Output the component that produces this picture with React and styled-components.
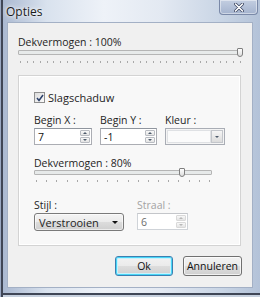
import React from "react";
import styled, { createGlobalStyle } from "styled-components";

const GlobalStyle = createGlobalStyle`
  html, body {
    margin: 0;
    padding: 0;
  }
  body {
    width: 260px;
    height: 297px;
    overflow: hidden;
    font-family: "Open Sans", "Noto Sans", sans-serif;
    font-size: 10.5px;
    color: #1e1e1e;
  }
`;

const Window = styled.div`
  width: 260px;
  height: 297px;
  box-sizing: border-box;
  display: flex;
  flex-direction: column;
  background: linear-gradient(
    90deg,
    #a7b6cf 0%,
    #d9e2ee 18%,
    #eef2f8 40%,
    #e3e9f2 62%,
    #c9d5e5 85%,
    #b3c2d8 100%
  );
  box-shadow: inset 1px 0 0 #9aa8c2, inset 3px 0 0 #3f4656,
    inset 0 -2px 0 #c6d0de, inset 0 -4px 0 #3f4656;
`;

const TitleBar = styled.div`
  height: 22px;
  display: flex;
  align-items: flex-start;
  padding-left: 6px;
  padding-right: 2px;
`;

const Title = styled.span`
  margin-top: 4px;
  font-size: 12px;
  line-height: 15px;
  color: #1b1b1b;
  text-shadow: 0 0 6px #ffffff, 0 0 3px #ffffff;
`;

const CloseButton = styled.div`
  margin-left: auto;
  width: 39px;
  height: 15px;
  box-sizing: border-box;
  border: 1px solid #7a89a8;
  border-top: none;
  border-radius: 0 0 4px 4px;
  background: linear-gradient(#c3cee1, #a4b3ce);
  box-shadow: inset 0 0 0 1px rgba(255, 255, 255, 0.45);
  display: flex;
  align-items: center;
  justify-content: center;
`;

const Body = styled.div`
  flex: 1;
  display: flex;
  padding: 0 7px 9px 7px;
`;

const Client = styled.div`
  flex: 1;
  box-sizing: border-box;
  background: #f0f0f0;
  border: 1px solid #a3b0c5;
  padding: 12px 9px 0 10px;
  display: flex;
  flex-direction: column;
`;

const Label = styled.div`
  line-height: ${(p) => p.lh || 14}px;
  color: ${(p) => (p.disabled ? "#a3a3a3" : "#1e1e1e")};
  white-space: nowrap;
`;

const SliderWrap = styled.div`
  position: relative;
  margin-right: ${(p) => p.mr || 0}px;
`;

const Track = styled.div`
  height: 5px;
  box-sizing: border-box;
  border: 1px solid #b5b5b5;
  border-radius: 1px;
  background: #e7eaea;
`;

const Thumb = styled.div`
  position: absolute;
  top: -2px;
  width: 6px;
  height: 9px;
  box-sizing: border-box;
  border: 1px solid #7f7f7f;
  border-radius: 1px 1px 3px 3px;
  background: linear-gradient(#fdfdfd, #dedede);
`;

const Ticks = styled.div`
  display: flex;
  justify-content: space-between;
  margin-top: ${(p) => p.gap || 6}px;
  padding: 0 2px;
`;

const Tick = styled.span`
  width: 1px;
  height: 2px;
  background: #a8a8a8;
`;

const Panel = styled.div`
  margin: 12px 2px 0 0;
  height: 171px;
  box-sizing: border-box;
  border: 1px solid #d3d3d3;
  box-shadow: inset 0 0 0 1px #ffffff;
  background: #f8f8f8;
  padding: 14px 14px 0 15px;
  display: flex;
  flex-direction: column;
`;

const CheckRow = styled.label`
  display: flex;
  align-items: center;
  gap: 3px;
  line-height: 15px;
  font-size: 11px;
`;

const Box = styled.span`
  width: 11px;
  height: 11px;
  box-sizing: border-box;
  border: 1px solid #8f8f8f;
  background: linear-gradient(135deg, #dcdcdc, #fbfbfb);
  display: flex;
  align-items: center;
  justify-content: center;
`;

const FieldRow = styled.div`
  display: flex;
  gap: ${(p) => p.gap || 8}px;
  margin-top: ${(p) => p.mt || 0}px;
`;

const Field = styled.div`
  display: flex;
  flex-direction: column;
  width: ${(p) => p.w}px;
`;

const SpinBox = styled.div`
  margin-top: 1px;
  height: ${(p) => p.h || 17}px;
  box-sizing: border-box;
  border: 1px solid ${(p) => (p.disabled ? "#cfd3d8" : "#abadb3")};
  border-top-color: ${(p) => (p.disabled ? "#c4c6ca" : "#8f959e")};
  background: #ffffff;
  display: flex;
  align-items: center;
  padding-left: 3px;
  color: ${(p) => (p.disabled ? "#6d6d6d" : "#111")};
`;

const SpinValue = styled.span`
  flex: 1;
  line-height: 14px;
`;

const SpinButtons = styled.div`
  align-self: stretch;
  width: 10px;
  margin: 1px 1px 1px 0;
  display: flex;
  flex-direction: column;
  gap: 1px;
`;

const SpinButton = styled.div`
  flex: 1;
  box-sizing: border-box;
  border: 1px solid ${(p) => (p.disabled ? "#d9d9d9" : "#b9bcc2")};
  border-radius: 1px;
  background: linear-gradient(#f8f8f8, #e4e4e4);
  display: flex;
  align-items: center;
  justify-content: center;
`;

const Arrow = styled.span`
  width: 0;
  height: 0;
  border-left: 2px solid transparent;
  border-right: 2px solid transparent;
  ${(p) => (p.up ? "border-bottom" : "border-top")}: 2px solid
    ${(p) => (p.disabled ? "#b8b8b8" : "#4d5a6b")};
`;

const ColorCombo = styled.div`
  margin-top: 1px;
  height: 17px;
  box-sizing: border-box;
  border: 1px solid #a9adb5;
  background: #f4f4f4;
  display: flex;
  padding: 1px;
`;

const ColorSwatch = styled.div`
  flex: 1;
  border: 1px solid #dfe1e4;
  background: #fbfbfb;
`;

const ComboButton = styled.div`
  width: 12px;
  box-sizing: border-box;
  border: 1px solid #c3c6cb;
  background: linear-gradient(#f5f5f5, #dcdcdc);
  display: flex;
  align-items: center;
  justify-content: center;
`;

const DropButton = styled.div`
  margin-top: 1px;
  height: 18px;
  box-sizing: border-box;
  border: 1px solid #7a7a7a;
  border-radius: 3px;
  background: linear-gradient(#f4f4f4 0%, #ebebeb 48%, #dcdcdc 52%, #cfcfcf 100%);
  box-shadow: inset 0 0 0 1px rgba(255, 255, 255, 0.6);
  display: flex;
  align-items: center;
  padding: 0 5px 0 4px;
  font-size: 11px;
`;

const DropText = styled.span`
  flex: 1;
  line-height: 15px;
`;

const DropArrow = styled.span`
  width: 0;
  height: 0;
  border-left: 3px solid transparent;
  border-right: 3px solid transparent;
  border-top: 3px solid #111;
`;

const Footer = styled.div`
  display: flex;
  justify-content: flex-end;
  gap: 10px;
  padding: 10px 0 0;
  margin-right: 1px;
`;

const Button = styled.button`
  width: ${(p) => p.w}px;
  height: 20px;
  box-sizing: border-box;
  padding: 0;
  font-family: inherit;
  font-size: 10.5px;
  color: #111;
  border-radius: 3px;
  border: 1px solid ${(p) => (p.primary ? "#3c7fb1" : "#707070")};
  background: linear-gradient(#f2f2f2 0%, #ebebeb 48%, #dddddd 52%, #cfcfcf 100%);
  box-shadow: ${(p) =>
    p.primary
      ? "inset 0 0 0 1px #48d6f7, inset 0 0 0 2px #c9f1fc"
      : "inset 0 0 0 1px rgba(255,255,255,0.7)"};
`;

const Slider = ({ pos, ticks, gap, mr }) => (
  <SliderWrap mr={mr}>
    <Track />
    <Thumb style={{ left: pos }} />
    <Ticks gap={gap}>
      {Array.from({ length: ticks }).map((_, i) => (
        <Tick key={i} />
      ))}
    </Ticks>
  </SliderWrap>
);

const Spin = ({ value, disabled }) => (
  <SpinBox disabled={disabled}>
    <SpinValue>{value}</SpinValue>
    <SpinButtons>
      <SpinButton disabled={disabled}>
        <Arrow up disabled={disabled} />
      </SpinButton>
      <SpinButton disabled={disabled}>
        <Arrow disabled={disabled} />
      </SpinButton>
    </SpinButtons>
  </SpinBox>
);

export default function App() {
  return (
    <>
      <GlobalStyle />
      <Window>
        <TitleBar>
          <Title>Opties</Title>
          <CloseButton>
            <svg width="10" height="9" viewBox="0 0 10 9">
              <path
                d="M1.5 1 L8.5 8 M8.5 1 L1.5 8"
                stroke="#3a4460"
                strokeWidth="3"
                strokeLinecap="round"
              />
              <path
                d="M1.5 1 L8.5 8 M8.5 1 L1.5 8"
                stroke="#ffffff"
                strokeWidth="1.6"
                strokeLinecap="round"
              />
            </svg>
          </CloseButton>
        </TitleBar>
        <Body>
          <Client>
            <Label lh={15}>Dekvermogen : 100%</Label>
            <Slider pos={219} ticks={34} gap={6} />
            <Panel>
              <CheckRow>
                <Box>
                  <svg width="8" height="8" viewBox="0 0 8 8">
                    <path
                      d="M1 4 L3 6.5 L7 1"
                      fill="none"
                      stroke="#2a3f6a"
                      strokeWidth="1.5"
                    />
                  </svg>
                </Box>
                Slagschaduw
              </CheckRow>
              <FieldRow mt={9}>
                <Field w={58}>
                  <Label lh={13}>Begin X :</Label>
                  <Spin value="7" />
                </Field>
                <Field w={57}>
                  <Label lh={13}>Begin Y :</Label>
                  <Spin value="-1" />
                </Field>
                <Field w={60}>
                  <Label lh={13}>Kleur :</Label>
                  <ColorCombo>
                    <ColorSwatch />
                    <ComboButton>
                      <Arrow />
                    </ComboButton>
                  </ColorCombo>
                </Field>
              </FieldRow>
              <Label lh={14} style={{ marginTop: 11 }}>
                Dekvermogen : 80%
              </Label>
              <Slider pos={145} ticks={18} gap={5} mr={14} />
              <FieldRow mt={17} gap={13}>
                <Field w={90}>
                  <Label lh={13}>Stijl :</Label>
                  <DropButton>
                    <DropText>Verstrooien</DropText>
                    <DropArrow />
                  </DropButton>
                </Field>
                <Field w={51}>
                  <Label lh={13} disabled>
                    Straal :
                  </Label>
                  <Spin value="6" disabled />
                </Field>
              </FieldRow>
            </Panel>
            <Footer>
              <Button primary w={58}>
                Ok
              </Button>
              <Button w={59}>Annuleren</Button>
            </Footer>
          </Client>
        </Body>
      </Window>
    </>
  );
}
